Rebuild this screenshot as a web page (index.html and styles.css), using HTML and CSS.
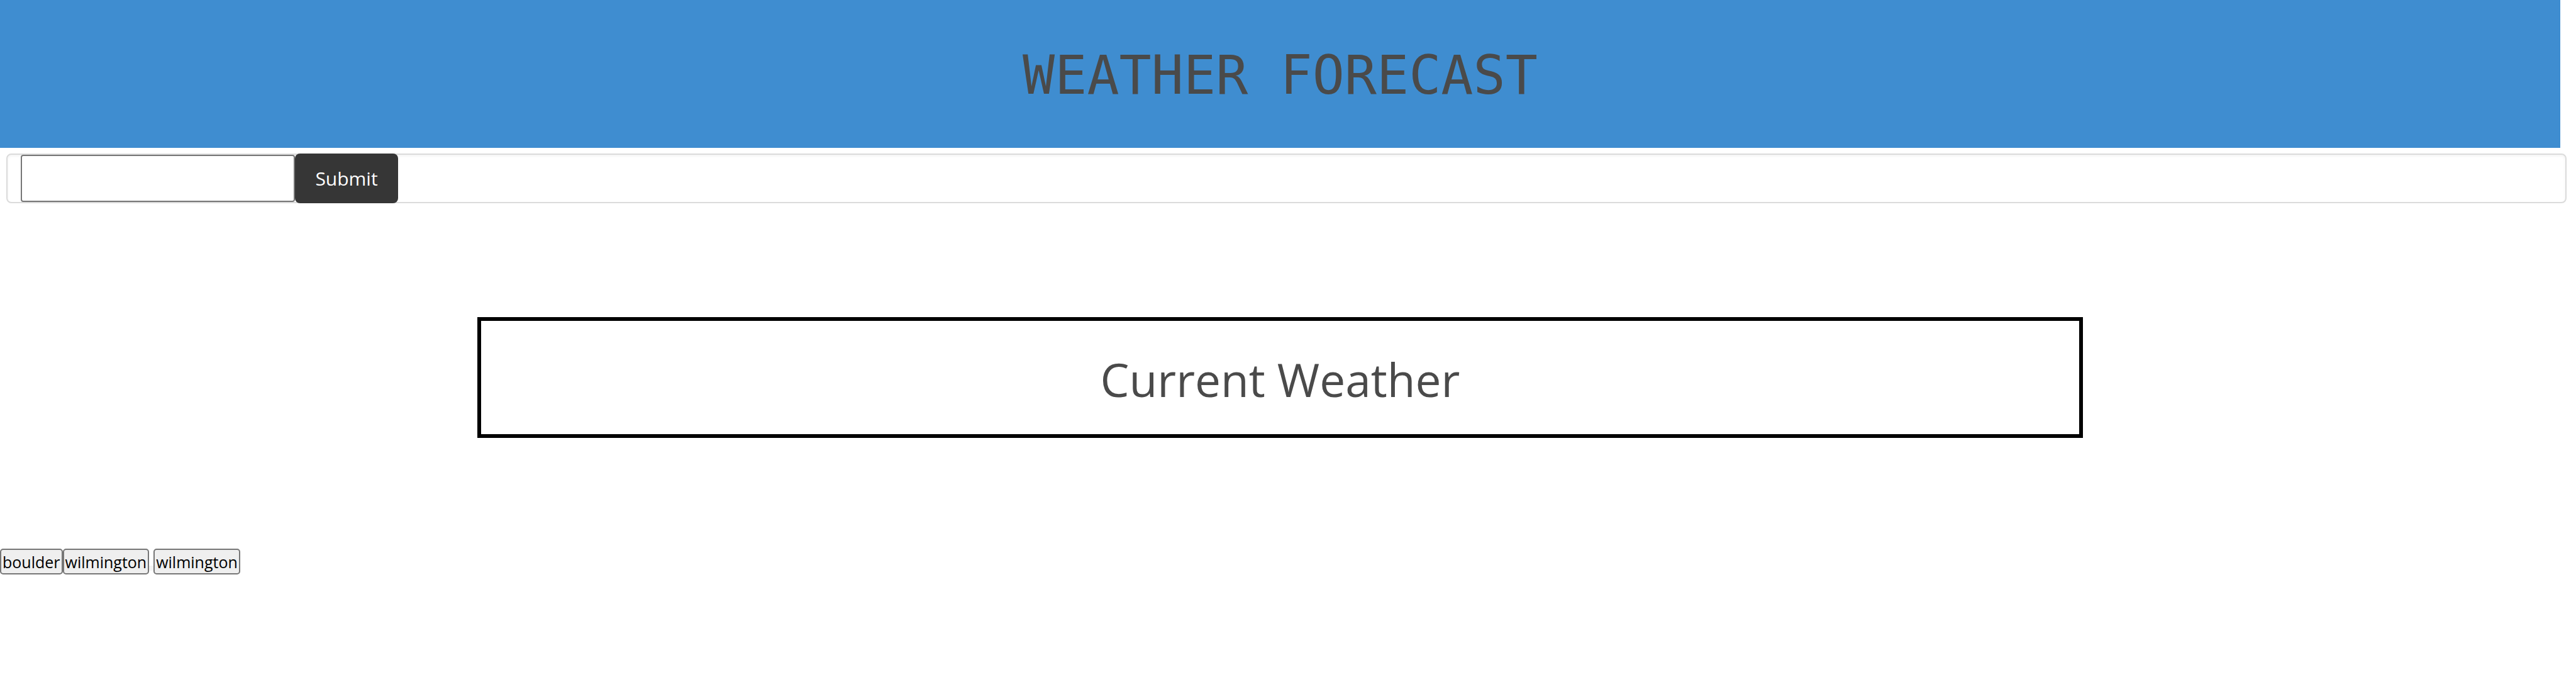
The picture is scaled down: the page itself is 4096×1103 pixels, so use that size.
FILE: index.html
```html
<!DOCTYPE html>
<html lang="en">
<head>
  <meta charset="utf-8">
  <title>Weather Forecast</title>
  <link rel="stylesheet" href="styles.css">
</head>
<body>
  <header class="hero">
    <h1 class="hero-title">WEATHER FORECAST</h1>
  </header>
  <form class="search">
    <input class="search-input" type="text" aria-label="City">
    <button class="search-button" type="button">Submit</button>
  </form>
  <main class="current">
    <h2 class="current-title">Current Weather</h2>
  </main>
  <div class="history">
    <button class="city" type="button">boulder</button>
    <button class="city" type="button">wilmington</button>
    <span class="divider"></span>
    <button class="city" type="button">wilmington</button>
  </div>
</body>
</html>
```

FILE: styles.css
```css
* {
  box-sizing: border-box;
  margin: 0;
}

body {
  padding-right: 25px;
  background: #fff;
  color: #4a4a4a;
  font-family: "Open Sans", "Noto Sans", sans-serif;
}

.hero {
  padding: 60px 0 55px;
  background: #3f8dd0;
  text-align: center;
}

.hero-title {
  font-family: "DejaVu Sans Mono", monospace;
  font-size: 85px;
  font-weight: 400;
  line-height: 120px;
}

.search {
  display: flex;
  align-items: center;
  height: 79px;
  margin: 9px -10px 0 10px;
  padding-left: 21px;
  border: 2px solid #dbdbdb;
  border-radius: 8px;
  box-shadow: inset 0 2px 4px rgba(10, 10, 10, 0.05);
}

.search-input {
  width: 436px;
  height: 75px;
  padding: 0 8px;
  border: 2px solid #767676;
  border-radius: 4px;
  background: #fff;
  font: inherit;
  font-size: 30px;
}

.search-button {
  flex: none;
  width: 164px;
  height: 79px;
  padding: 0;
  border: 0;
  border-radius: 8px;
  background: #363636;
  color: #fff;
  font: inherit;
  font-size: 30px;
}

.current {
  width: 62.7%;
  margin: 181px auto 0;
  padding: 45px 0 39px;
  border: 6px solid #000;
  text-align: center;
}

.current-title {
  font-size: 73px;
  font-weight: 400;
  line-height: 96px;
}

.history {
  display: flex;
  margin-top: 176px;
}

.city {
  height: 41px;
  padding: 0 2px;
  border: 2px solid #767676;
  border-radius: 5px;
  background: #efefef;
  color: #000;
  font: inherit;
  font-size: 25px;
  line-height: 36px;
}

.divider {
  width: 7px;
  height: 8px;
  margin-top: 27px;
  background: #f3f3f3;
}
```
